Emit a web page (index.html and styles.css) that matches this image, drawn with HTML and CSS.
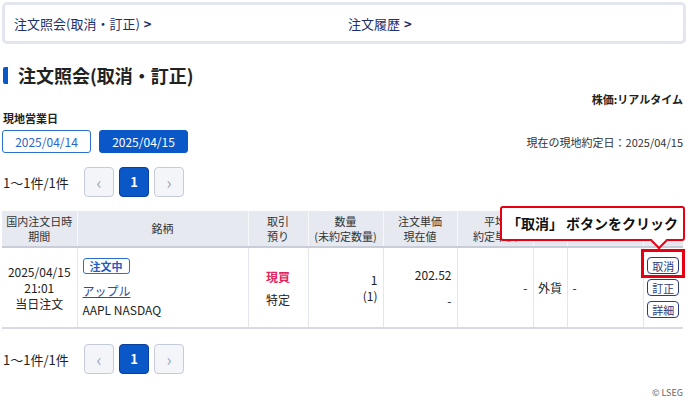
FILE: index.html
```html
<!DOCTYPE html>
<html lang="ja">

<head>
  <meta charset="UTF-8" />
  <title>注文照会(取消・訂正)</title>
  <meta name="viewport" content="width=device-width, initial-scale=1.0" />
  <link rel="stylesheet" href="styles.css">
</head>

<body>
  <div class="page">
    <!-- サブメニュー -->
    <nav class="subnav">
      <a class="subnav-link first" href="#">注文照会(取消・訂正) <span class="chev">&gt;</span></a>
      <a class="subnav-link" href="#">注文履歴 <span class="chev">&gt;</span></a>
    </nav>

    <h1 class="title">注文照会(取消・訂正)</h1>

    <div class="realtime">株価:リアルタイム</div>

    <div class="bizday-label">現地営業日</div>
    <div class="bizday-row">
      <div class="dates">
        <button class="date-btn">2025/04/14</button>
        <button class="date-btn active">2025/04/15</button>
      </div>
      <div class="trade-date">現在の現地約定日：2025/04/15</div>
    </div>

    <div class="pager">
      <span class="count">1〜1件/1件</span>
      <button class="page-btn">&lsaquo;</button>
      <button class="page-btn current">1</button>
      <button class="page-btn">&rsaquo;</button>
    </div>

    <div class="table-wrap">
      <table class="orders">
        <colgroup>
          <col style="width:75px">
          <col style="width:171px">
          <col style="width:60px">
          <col style="width:75px">
          <col style="width:74px">
          <col style="width:76px">
          <col style="width:34px">
          <col style="width:76px">
          <col style="width:40px">
        </colgroup>
        <thead>
          <tr>
            <th>国内注文日時<br>期間</th>
            <th>銘柄</th>
            <th>取引<br>預り</th>
            <th>数量<br>(未約定数量)</th>
            <th>注文単価<br>現在値</th>
            <th>平均<br>約定単価</th>
            <th></th>
            <th></th>
            <th></th>
          </tr>
        </thead>
        <tbody>
          <tr>
            <td class="center lines">
              <div>2025/04/15</div>
              <div>21:01</div>
              <div>当日注文</div>
            </td>
            <td class="stock">
              <span class="badge">注文中</span>
              <a class="stock-name" href="#">アップル</a>
              <div class="ticker">AAPL NASDAQ</div>
            </td>
            <td class="center">
              <div class="buy">現買</div>
              <div class="gap2">特定</div>
            </td>
            <td class="num lines">
              <div>1</div>
              <div>(1)</div>
            </td>
            <td class="num">
              <div>202.52</div>
              <div class="gap3">-</div>
            </td>
            <td class="num">-</td>
            <td class="center tight">外貨</td>
            <td>-</td>
            <td class="actions">
              <button class="act-btn">取消</button>
              <button class="act-btn">訂正</button>
              <button class="act-btn">詳細</button>
            </td>
          </tr>
        </tbody>
      </table>

      <!-- 操作説明 -->
      <div class="callout">「取消」 ボタンをクリック</div>
      <div class="highlight"></div>
    </div>

    <div class="pager bottom">
      <span class="count">1〜1件/1件</span>
      <button class="page-btn">&lsaquo;</button>
      <button class="page-btn current">1</button>
      <button class="page-btn">&rsaquo;</button>
    </div>

    <div class="copy">© LSEG</div>
  </div>
</body>

</html>
```

FILE: styles.css
```css
body {
  margin: 0;
  padding: 0;
  background: #fff;
  font-family: "Noto Sans CJK JP", "Noto Sans", sans-serif;
  color: #222;
}

.page {
  width: 690px;
  padding: 2px 7px 0 2px;
  box-sizing: border-box;
}

button {
  font-family: inherit;
}

/* サブメニュー */
.subnav {
  display: flex;
  align-items: center;
  height: 42px;
  box-sizing: border-box;
  border: 3px solid #e3e6ee;
  border-radius: 5px;
  padding-left: 9px;
  margin-right: -3px;
}

.subnav-link {
  color: #1e2f6e;
  text-decoration: none;
  font-size: 13px;
}

.subnav-link.first {
  width: 334px;
}

.chev {
  font-weight: bold;
  margin-left: 1px;
}

.title {
  margin: 23px 0 0 1px;
  padding-left: 10px;
  border-left: 5px solid #0a57c8;
  border-radius: 2px;
  font-size: 18px;
  line-height: 17px;
  font-weight: bold;
  color: #222;
}

.realtime {
  margin-top: 7px;
  text-align: right;
  font-size: 11px;
  font-weight: bold;
}

.bizday-label {
  margin: 3px 0 0 1px;
  font-size: 11px;
  font-weight: bold;
}

.bizday-row {
  display: flex;
  justify-content: space-between;
  align-items: center;
  margin-top: 4px;
}

.dates {
  display: flex;
  gap: 8px;
}

.date-btn {
  width: 89px;
  height: 23px;
  padding: 0;
  border: 1px solid #2c6fd1;
  border-radius: 3px;
  background: #fff;
  color: #2a66c8;
  font-size: 12px;
}

.date-btn.active {
  background: #0a57c8;
  border-color: #0a57c8;
  color: #fff;
}

.trade-date {
  font-size: 11px;
  color: #333;
}

/* ページャー */
.pager {
  display: flex;
  align-items: center;
  gap: 5px;
  margin-top: 14px;
  margin-left: 1px;
}

.pager .count {
  font-size: 13px;
  width: 76px;
}

.page-btn {
  width: 30px;
  height: 30px;
  padding: 0;
  border: 1px solid #c5cbd8;
  border-radius: 4px;
  background: #f4f5f8;
  color: #9aa2b4;
  font-size: 17px;
  line-height: 26px;
}

.page-btn.current {
  background: #0a57c8;
  border-color: #0a3f9c;
  color: #fff;
  font-size: 13px;
  font-weight: bold;
}

.pager.bottom {
  margin-top: 15px;
}

/* 注文一覧 */
.table-wrap {
  position: relative;
  margin-top: 14px;
}

.orders {
  width: 681px;
  table-layout: fixed;
  border-collapse: collapse;
  font-size: 11px;
}

.orders th {
  height: 35px;
  padding: 0 2px;
  background: #e7e9f0;
  border-left: 1px solid #f7f8fa;
  border-bottom: 2px solid #c9cdd8;
  font-weight: normal;
  line-height: 15px;
  color: #333;
}

.orders th:first-child,
.orders td:first-child {
  border-left: none;
}

.orders td {
  height: 79px;
  padding: 0 5px;
  border-left: 1px solid #e3e6ec;
  border-bottom: 2px solid #d8dbe3;
  vertical-align: middle;
  font-size: 12px;
  line-height: 15px;
}

.orders td.lines {
  line-height: 16px;
}

.orders td.center {
  text-align: center;
}

.orders td.num {
  text-align: right;
}

.orders td.tight {
  padding: 0;
  white-space: nowrap;
}

.gap2 {
  margin-top: 8px;
}

.gap3 {
  margin-top: 11px;
}

.badge {
  display: inline-block;
  padding: 0 6px;
  border: 1px solid #2c6fd1;
  border-radius: 3px;
  color: #1f5ec4;
  font-size: 11px;
  font-weight: bold;
  line-height: 14px;
}

.stock-name {
  display: block;
  margin-top: 9px;
  color: #2e4d9e;
  text-decoration: underline;
}

.ticker {
  margin-top: 4px;
}

.buy {
  color: #e0245e;
  font-weight: bold;
}

.orders td.actions {
  padding: 0;
  text-align: center;
}

.act-btn {
  display: block;
  margin: 0 auto 5px;
  width: 32px;
  height: 17px;
  padding: 0;
  border: 1px solid #2a3c7c;
  border-radius: 4px;
  background: #fff;
  color: #2a3c7c;
  font-size: 11px;
  line-height: 14px;
}

.act-btn:last-child {
  margin-bottom: 0;
}

/* 吹き出し */
.callout {
  position: absolute;
  top: -5px;
  left: 498px;
  width: 185px;
  height: 35px;
  box-sizing: border-box;
  border: 2px solid #e60012;
  border-radius: 3px;
  background: #fff;
  font-size: 14px;
  font-weight: bold;
  line-height: 31px;
  text-align: center;
  color: #111;
  white-space: nowrap;
}

.callout::after {
  content: "";
  position: absolute;
  left: 151px;
  bottom: -8px;
  width: 10px;
  height: 10px;
  background: #fff;
  border-right: 2px solid #e60012;
  border-bottom: 2px solid #e60012;
  transform: rotate(45deg);
}

.highlight {
  position: absolute;
  top: 38px;
  left: 639px;
  width: 44px;
  height: 29px;
  box-sizing: border-box;
  border: 3px solid #e60012;
}

.copy {
  margin-top: 12px;
  text-align: right;
  font-size: 9px;
  color: #666;
}
```
